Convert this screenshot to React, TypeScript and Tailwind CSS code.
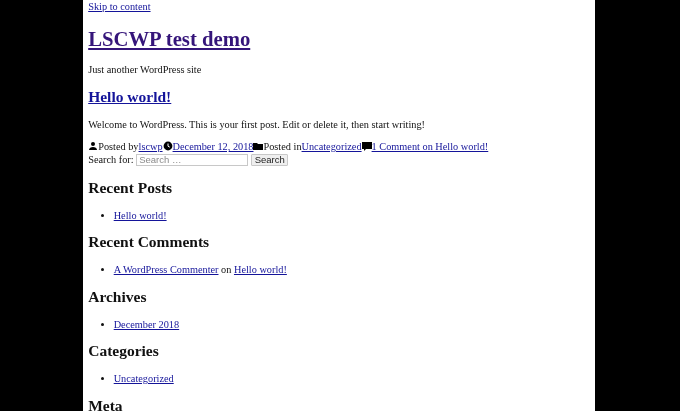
const link = "text-[#14149a] underline";
const visited = "text-[#35157a] underline";

function Widget({ title, children }: { title: string; children: React.ReactNode }) {
  return (
    <section>
      <h2 className="mt-[11.5px] mb-[13px] text-[15.5px] leading-[18px] font-bold">{title}</h2>
      <ul className="list-disc pl-[25.5px]">
        <li className="leading-[12px]">{children}</li>
      </ul>
    </section>
  );
}

export default function App() {
  return (
    <div className="h-[411px] w-[680px] overflow-hidden bg-black">
      <div className="ml-[83px] h-[411px] w-[512px] overflow-hidden bg-white pt-px pl-[5.2px] text-[10.3px] leading-[12px] text-[#111] [font-family:'Liberation_Serif',serif]">
        <div className="blur-[0.3px]">
          <a className={link}>Skip to content</a>
          <h1 className="mt-[14px] mb-[13px] text-[20.7px] leading-[24px] font-bold">
            <a className={visited}>LSCWP test demo</a>
          </h1>
          <p>Just another WordPress site</p>
          <h2 className="mt-[12px] mb-[13px] text-[15.5px] leading-[18px] font-bold">
            <a className={link}>Hello world!</a>
          </h2>
          <p>Welcome to WordPress. This is your first post. Edit or delete it, then start writing!</p>
          <div className="mt-[10px] flex items-center whitespace-pre">
            <svg viewBox="0 0 10 10" className="h-[10px] w-[10px] -translate-y-[1px] fill-black">
              <circle cx="5" cy="3" r="2" />
              <path d="M1 9c0-2 2-3 4-3s4 1 4 3z" />
            </svg>
            <span>Posted by</span>
            <a className={link}>lscwp</a>
            <svg viewBox="0 0 10 10" className="h-[10px] w-[10px] -translate-y-[1px]">
              <circle cx="5" cy="5" r="4.4" className="fill-black" />
              <path d="M5 2.5v2.7l1.8 1" className="fill-none stroke-white" />
            </svg>
            <a className={link}>December 12, 2018</a>
            <svg viewBox="0 0 10 10" className="h-[10px] w-[10px] -translate-y-[1px] fill-black">
              <path d="M0 2h4l1 1h5v6H0z" />
            </svg>
            <span>Posted in</span>
            <a className={link}>Uncategorized</a>
            <svg viewBox="0 0 10 10" className="h-[10px] w-[10px] -translate-y-[1px] fill-black">
              <path d="M0 1h10v7H4L2 10V8H0z" />
            </svg>
            <a className={link}>1 Comment on Hello world!</a>
          </div>
          <form className="mt-px mb-[12.5px] flex items-center">
            <label className="whitespace-pre">Search for: </label>
            <input
              placeholder="Search …"
              className="h-[12px] w-[112px] border border-[#c8c8c8] px-[2px] text-[9.5px] [font-family:'Liberation_Sans',sans-serif] placeholder:text-[#8a8a8a]"
            />
            <button
              type="button"
              className="ml-[3px] h-[12px] w-[37px] rounded-[1px] border border-[#c8c8c8] bg-[#efefef] text-[9.5px] leading-[10px] text-[#222] [font-family:'Liberation_Sans',sans-serif]"
            >
              Search
            </button>
          </form>
          <Widget title="Recent Posts">
            <a className={link}>Hello world!</a>
          </Widget>
          <Widget title="Recent Comments">
            <a className={link}>A WordPress Commenter</a> on <a className={link}>Hello world!</a>
          </Widget>
          <Widget title="Archives">
            <a className={link}>December 2018</a>
          </Widget>
          <Widget title="Categories">
            <a className={link}>Uncategorized</a>
          </Widget>
          <h2 className="mt-[11.5px] text-[15.5px] leading-[18px] font-bold">Meta</h2>
        </div>
      </div>
    </div>
  );
}
